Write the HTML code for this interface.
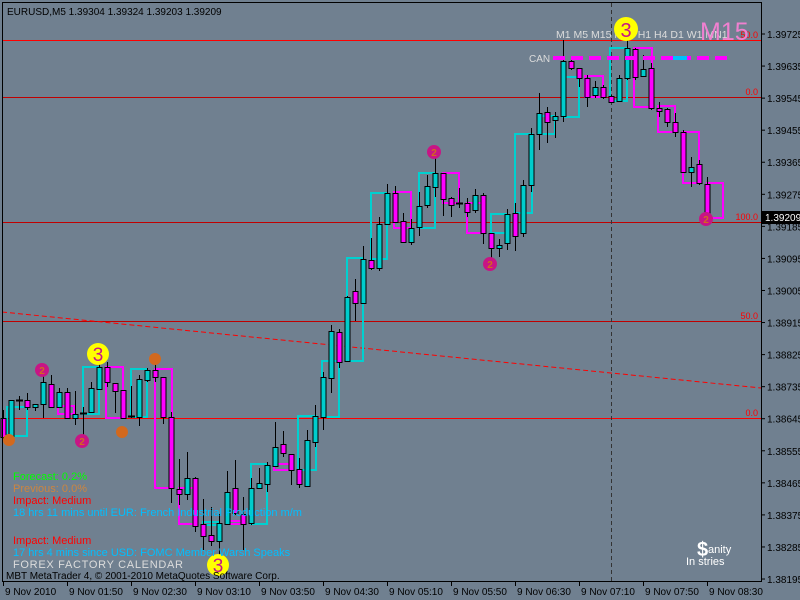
<!DOCTYPE html>
<html><head><meta charset="utf-8"><style>
html,body{margin:0;padding:0;background:#708090;width:800px;height:600px;overflow:hidden}
svg{display:block}
text{font-family:"Liberation Sans",sans-serif}
</style></head><body>
<svg id="s" width="800" height="600" xmlns="http://www.w3.org/2000/svg">
<rect width="800" height="600" fill="#708090"/>
<g id="grid">
<line x1="2" y1="40.5" x2="761" y2="40.5" stroke="#ff0000"/>
<line x1="2" y1="97.5" x2="761" y2="97.5" stroke="#c00000"/>
<line x1="2" y1="222.5" x2="761" y2="222.5" stroke="#c00000"/>
<line x1="2" y1="321.5" x2="761" y2="321.5" stroke="#c00000"/>
<line x1="2" y1="418.5" x2="761" y2="418.5" stroke="#ff0000"/>
<line x1="611.5" y1="3" x2="611.5" y2="581" stroke="#333" stroke-dasharray="4,3"/>
<line x1="2" y1="312" x2="761" y2="388" stroke="#ff0000" stroke-dasharray="5,3"/>
</g>
<g font-size="9" fill="#ff0000" text-anchor="end">
<text x="758" y="38">50.0</text><text x="758" y="95">0.0</text><text x="758" y="220">100.0</text><text x="758" y="319">50.0</text><text x="758" y="416">0.0</text>
</g>
<g id="boxes" fill="none" stroke-width="2"></g>
<g id="candles"></g>
<g stroke-width="4">
<line x1="553" y1="58" x2="727" y2="58" stroke="#ff00ff" stroke-dasharray="12,6"/>
<line x1="673" y1="58" x2="687" y2="58" stroke="#00bfff"/>
</g>
<text x="529" y="62" font-size="10" fill="#dcdcdc">CAN</text>
<text x="556" y="38" font-size="10.5" fill="#dcdcdc">M1 M5 M15 M30 H1  H4  D1  W1 MN1</text>
<text x="700" y="40" font-size="25" fill="#f080d0">M15</text>
<g font-size="10" text-anchor="middle" font-weight="bold">
<circle cx="626" cy="29" r="12" fill="#ffff00"/><text x="626" y="37" font-size="20" fill="#c71585" font-weight="normal">3</text>
<circle cx="98" cy="354" r="11" fill="#ffff00"/><text x="98" y="361" font-size="19" fill="#c71585" font-weight="normal">3</text>
<circle cx="218" cy="565" r="11" fill="#ffff00"/><text x="218" y="572" font-size="19" fill="#c71585" font-weight="normal">3</text>
<circle cx="434" cy="152" r="7" fill="#c71585"/><text x="434" y="156" fill="#d2691e">2</text>
<circle cx="490" cy="264" r="7" fill="#c71585"/><text x="490" y="268" fill="#d2691e">2</text>
<circle cx="42" cy="370" r="7" fill="#c71585"/><text x="42" y="374" fill="#d2691e">2</text>
<circle cx="82" cy="441" r="7" fill="#c71585"/><text x="82" y="445" fill="#d2691e">2</text>
<circle cx="706" cy="219" r="7" fill="#c71585"/><text x="706" y="223" fill="#d2691e">2</text>
<circle cx="9" cy="440" r="6" fill="#d2691e"/>
<circle cx="155" cy="359" r="6" fill="#d2691e"/>
<circle cx="122" cy="432" r="6" fill="#d2691e"/>
</g>
<g font-size="11">
<text x="13" y="480" fill="#00ff00">Forecast: 0.2%</text>
<text x="13" y="492" fill="#cd853f">Previous: 0.0%</text>
<text x="13" y="504" fill="#ff0000">Impact: Medium</text>
<text x="13" y="516" fill="#00bfff">18 hrs 11 mins until EUR: French Industrial Production m/m</text>
<text x="13" y="544" fill="#ff0000">Impact: Medium</text>
<text x="13" y="556" fill="#00bfff">17 hrs 4 mins since USD: FOMC Member Warsh Speaks</text>
<text x="13" y="568" fill="#dcdcdc" letter-spacing="0.7">FOREX FACTORY CALENDAR</text>
<text x="6" y="579" font-size="10" fill="#000">MBT MetaTrader 4, © 2001-2010 MetaQuotes Software Corp.</text>
</g>
<g fill="#fff" font-weight="bold">
<text x="697" y="556" font-size="20">$</text>
<text x="708" y="553" font-size="11" font-weight="normal">anity</text>
<text x="686" y="565" font-size="11" font-weight="normal">In   stries</text>
</g>
<g stroke="#000" fill="none">
<line x1="2.5" y1="2" x2="2.5" y2="581"/>
<line x1="2" y1="2.5" x2="761" y2="2.5"/>
<line x1="761.5" y1="2" x2="761.5" y2="581"/>
<line x1="2" y1="581.5" x2="762" y2="581.5"/>
</g>
<text x="7" y="15" font-size="10" fill="#000">EURUSD,M5  1.39304 1.39324 1.39203 1.39209</text>
<g id="axis" font-size="10" fill="#000"></g>
<rect x="762" y="211" width="38" height="13" fill="#000"/>
<text x="765" y="221" font-size="10" fill="#fff">1.39209</text>
</svg>
<script>
var NS="http://www.w3.org/2000/svg";
function el(p,t,a){var e=document.createElementNS(NS,t);for(var k in a)e.setAttribute(k,a[k]);p.appendChild(e);return e;}
var ax=document.getElementById('axis');
var prices=["1.39725","1.39635","1.39545","1.39455","1.39365","1.39275","1.39185","1.39095","1.39005","1.38915","1.38825","1.38735","1.38645","1.38555","1.38465","1.38375","1.38285","1.38195"];
for(var i=0;i<prices.length;i++){var y=34+i*32.06;
 el(ax,'line',{x1:761,y1:y,x2:765,y2:y,stroke:'#000'});
 var t=el(ax,'text',{x:767,y:y+4});t.textContent=prices[i];}
var times=["9 Nov 2010","9 Nov 01:50","9 Nov 02:30","9 Nov 03:10","9 Nov 03:50","9 Nov 04:30","9 Nov 05:10","9 Nov 05:50","9 Nov 06:30","9 Nov 07:10","9 Nov 07:50","9 Nov 08:30"];
for(var i=0;i<times.length;i++){var x=3+i*64;
 el(ax,'line',{x1:x+.5,y1:581,x2:x+.5,y2:586,stroke:'#000'});
 var t=el(ax,'text',{x:x+2,y:595});t.textContent=times[i];}
var bx=document.getElementById('boxes');
var B=[["c",7,407,27,436],["m",58,406,74,414],["c",83,367,99,414],["m",106,367,123,418],["c",131,369,147,417],["m",155,369,172,488],["m",179,488,195,524],["c",203,522,219,525],["m",227,521,243,524],["c",251,464,267,524],["m",274,464,292,470],["c",298,416,316,470],["c",322,361,339,417],["c",347,258,363,361],["c",371,193,387,259],["m",394,192,411,228],["c",419,173,435,228],["m",443,173,459,203],["m",467,203,482,233],["c",491,214,507,233],["c",515,134,532,213],["c",539,116,555,134],["c",563,77,579,117],["m",585,76,603,97],["c",610,48,627,101],["m",634,48,652,107],["m",658,106,675,132],["m",683,132,699,183],["m",707,183,723,218]];
B.forEach(function(b){el(bx,'rect',{x:b[1],y:b[2],width:b[3]-b[1],height:b[4]-b[2],stroke:b[0]=="c"?"#00d0d0":"#ff00ff"});});
var C=[[410,440,418,437,"m"],[400,442,400,436,"c"],[396,410,400,401,"k"],[393,410,400,407,"m"],[404,411,404,407,"c"],[370,418,382,404,"c"],[375,407,384,407,"m"],[388,407,392,407,"c"],[388,418,392,418,"m"],[391,425,414,418,"c"],[407,443,413,414,"k"],[382,412,388,412,"c"],[355,389,367,389,"c"],[362,387,367,382,"m"],[383,413,383,391,"m"],[390,418,390,418,"m"],[386,418,416,418,"k"],[375,426,379,417,"c"],[368,382,370,380,"c"],[358,382,370,377,"m"],[377,424,377,417,"m"],[412,503,417,488,"m"],[459,505,489,494,"m"],[452,500,478,494,"c"],[477,532,478,526,"m"],[499,550,524,536,"m"],[507,546,535,541,"m"],[514,560,523,541,"c"],[471,525,492,524,"c"],[460,515,488,513,"m"],[497,550,514,524,"m"],[478,525,488,523,"c"],[468,488,483,488,"c"],[462,492,465,484,"c"],[422,466,447,466,"c"],[431,457,444,453,"m"],[454,485,454,470,"m"],[458,488,469,484,"m"],[430,487,440,486,"c"],[405,447,416,442,"c"],[372,430,377,417,"c"],[325,393,331,378,"c"],[329,368,332,362,"m"],[296,362,297,361,"c"],[279,321,291,303,"m"],[246,303,259,303,"c"],[238,270,260,268,"m"],[217,271,224,268,"c"],[184,224,193,224,"c"],[186,222,193,222,"m"],[213,242,221,242,"m"],[219,245,228,242,"c"],[192,236,206,227,"c"],[175,208,186,205,"c"],[153,197,173,187,"c"],[173,216,173,199,"m"],[197,217,198,205,"m"],[188,208,203,204,"k"],[198,217,203,212,"m"],[189,213,195,210,"c"],[193,244,195,233,"m"],[233,263,233,248,"m"],[239,257,245,248,"c"],[209,250,214,243,"c"],[203,251,213,236,"m"],[180,237,185,233,"c"],[128,192,134,185,"c"],[93,150,113,134,"c"],[107,143,112,122,"m"],[112,138,116,120,"c"],[40,122,61,116,"c"],[60,70,61,68,"m"],[68,87,68,78,"m"],[75,107,78,97,"m"],[81,98,87,95,"c"],[85,99,87,97,"m"],[95,102,96,102,"m"],[75,101,78,101,"c"],[30,80,48,78,"c"],[48,80,49,77,"m"],[55,76,69,76,"c"],[63,110,68,108,"m"],[102,117,108,111,"m"],[108,127,109,122,"m"],[113,137,122,132,"m"],[130,172,132,172,"m"],[157,187,167,172,"c"],[160,185,164,183,"m"],[177,220,184,219,"m"]];
var cg=document.getElementById('candles');
C.forEach(function(c,k){var x=3+8*k;
 el(cg,'line',{x1:x+.5,y1:c[0],x2:x+.5,y2:c[1],stroke:'#000'});
 var h=c[3]-c[2];
 if(c[4]=="k"||h<1){el(cg,'line',{x1:x-3,y1:c[2]+.5,x2:x+4,y2:c[2]+.5,stroke:'#000',"stroke-width":2});return;}
 el(cg,'rect',{x:x-2,y:c[2]+.5,width:5,height:h,fill:c[4]=="c"?"#00cccc":"#ff00ff",stroke:'#000'});
});
</script>
</body></html>
